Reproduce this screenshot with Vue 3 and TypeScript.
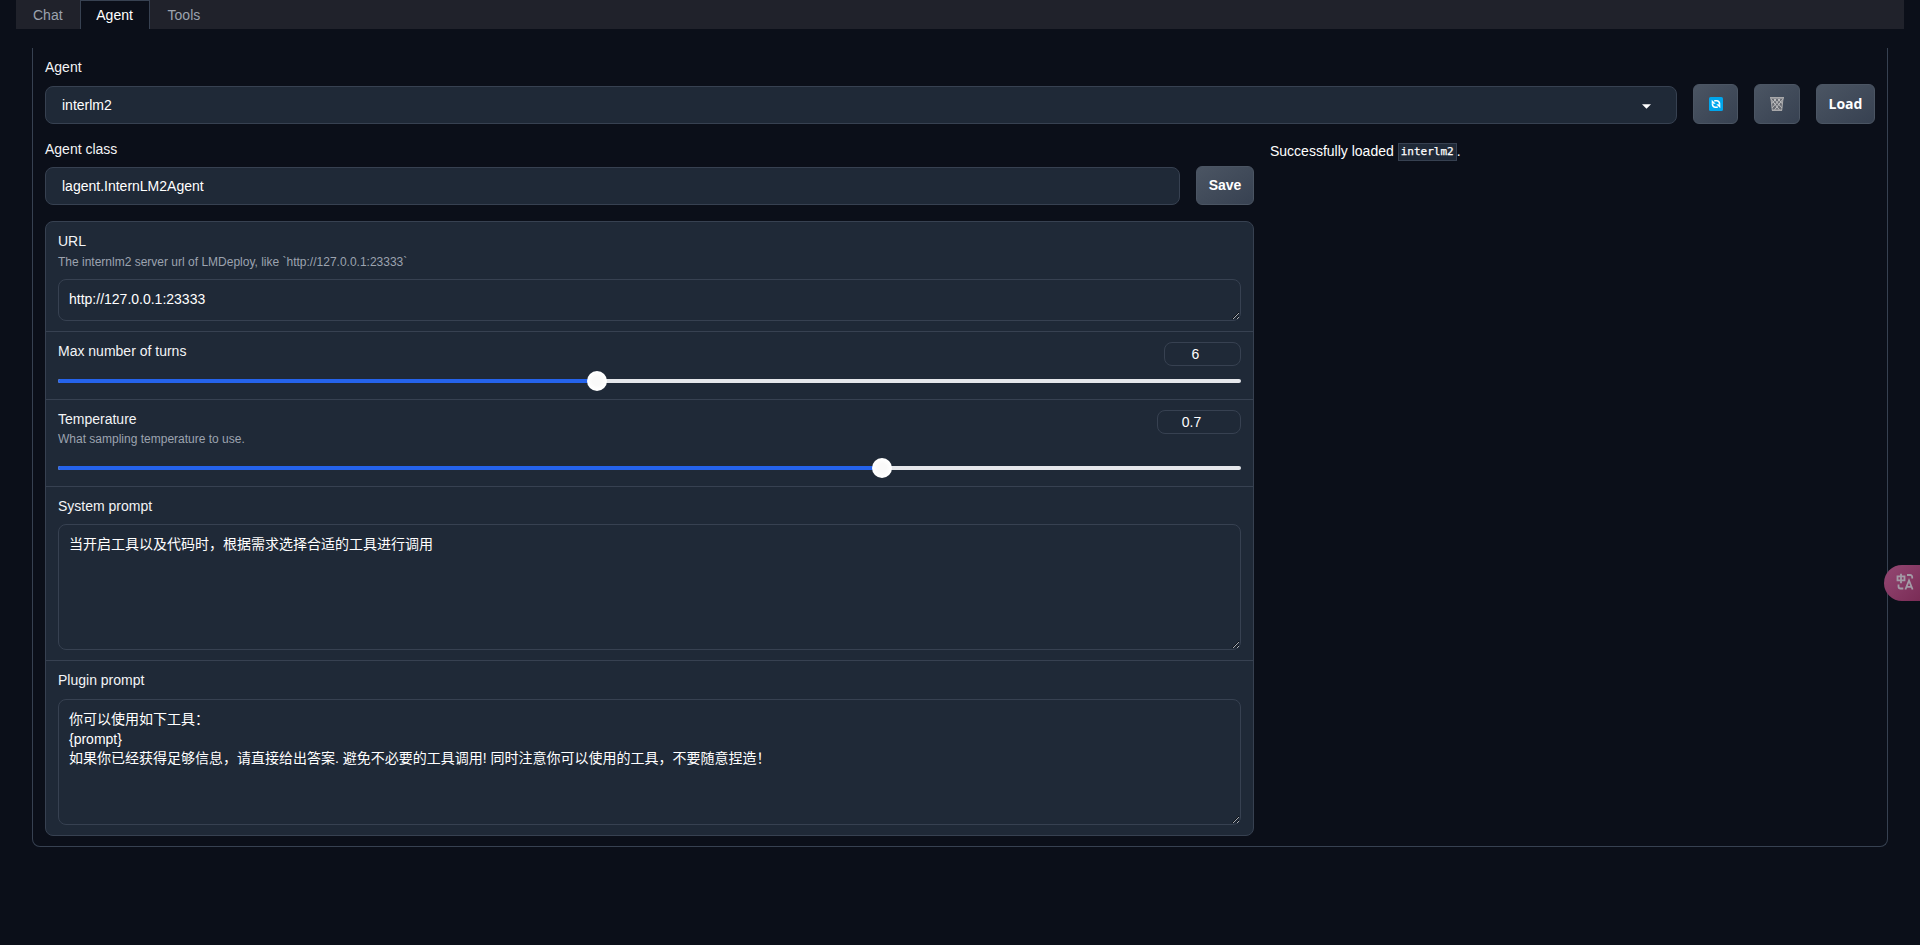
<script setup lang="ts">
import { ref } from 'vue'

interface SliderField {
  label: string
  info?: string
  value: string
  percent: number
}

const tabs = ['Chat', 'Agent', 'Tools']
const activeTab = ref('Agent')
const url = ref('http://127.0.0.1:23333')
const systemPrompt = ref('当开启工具以及代码时，根据需求选择合适的工具进行调用')
const pluginPrompt = ref(
  '你可以使用如下工具：\n{prompt}\n如果你已经获得足够信息，请直接给出答案. 避免不必要的工具调用! 同时注意你可以使用的工具，不要随意捏造！',
)
const sliders: SliderField[] = [
  { label: 'Max number of turns', value: '6', percent: 45.55 },
  { label: 'Temperature', info: 'What sampling temperature to use.', value: '0.7', percent: 69.65 },
]
</script>

<template>
  <div class="page">
    <nav class="tabs">
      <button
        v-for="tab in tabs"
        :key="tab"
        class="tab"
        :class="{ active: tab === activeTab }"
        @click="activeTab = tab"
      >{{ tab }}</button>
    </nav>

    <main class="panel">
      <div class="agent-row">
        <div class="field">
          <div class="label">Agent</div>
          <div class="box">
            <span>interlm2</span>
            <svg class="caret" width="9" height="5" viewBox="0 0 9 5"><path d="M0 0.3h9L4.5 4.8z" fill="#fff" /></svg>
          </div>
        </div>
        <button class="btn refresh">
          <svg width="14" height="14" viewBox="0 0 14 14">
            <rect width="14" height="14" rx="1.6" fill="#00a6ed" />
            <path d="M5.2 3.8h2.6a2.7 2.7 0 0 1 2.7 2.7v.8" fill="none" stroke="#fff" stroke-width="1.6" />
            <path d="M8.8 10.2H6.2a2.7 2.7 0 0 1-2.7-2.7v-.8" fill="none" stroke="#fff" stroke-width="1.6" />
            <path d="M2.7 2.8v3.9h4zM11.3 11.2V7.3h-4z" fill="#fff" />
          </svg>
        </button>
        <button class="btn trash">
          <svg width="14" height="14" viewBox="0 0 14 14">
            <path d="M.9 1.5h12.2l-1.4 11.9H2.3z" fill="#686b72" />
            <path d="M1 2l8.5 11M4 2l8 9M8 2l4.6 5M13 2L4.5 13M10 2L2 11M6 2L1.4 7" stroke="#c9c9cb" stroke-width=".9" />
            <path d="M0 .9h14M2 13.2h10" stroke="#a8a8aa" stroke-width="1.6" />
            <path d="M1 1.5l1.3 12M13 1.5l-1.3 12" stroke="#aaaaac" />
          </svg>
        </button>
        <button class="btn load">Load</button>
      </div>

      <div class="columns">
        <section class="settings">
          <div class="class-row">
            <div class="field">
              <div class="label">Agent class</div>
              <div class="box">lagent.InternLM2Agent</div>
            </div>
            <button class="btn save">Save</button>
          </div>

          <div class="form">
            <div class="block url">
              <div class="label">URL</div>
              <div class="info">The internlm2 server url of LMDeploy, like `http://127.0.0.1:23333`</div>
              <textarea v-model="url" class="short" spellcheck="false" />
            </div>
            <div v-for="s in sliders" :key="s.label" class="block slider" :class="{ tall: s.info }">
              <div class="head">
                <div>
                  <div class="label">{{ s.label }}</div>
                  <div v-if="s.info" class="info">{{ s.info }}</div>
                </div>
                <div class="number">{{ s.value }}</div>
              </div>
              <div class="track">
                <div class="fill" :style="{ width: s.percent + '%' }"><i class="thumb" /></div>
              </div>
            </div>
            <div class="block prompt">
              <div class="label">System prompt</div>
              <textarea v-model="systemPrompt" spellcheck="false" />
            </div>
            <div class="block prompt">
              <div class="label">Plugin prompt</div>
              <textarea v-model="pluginPrompt" spellcheck="false" />
            </div>
          </div>
        </section>
        <p class="status">Successfully loaded <code>interlm2</code>.</p>
      </div>
    </main>

    <div class="translate">
      <svg width="18" height="18" viewBox="0 0 18 18" fill="none" stroke="#a39ba6" stroke-width="1.8">
        <path d="M1.5 3.3h7v4h-7zM5 .8v9.4M11 2h3.2a2 2 0 0 1 2 2v1.5M2.5 11.5v2a2 2 0 0 0 2 2h2.8" />
        <path d="M9.4 16.5l3.6-9 3.6 9M10.6 13.8h4.8" />
      </svg>
    </div>
  </div>
</template>

<style>
body {
  background: #0b0f19;
  overflow: hidden;
}
</style>

<style scoped>
* {
  box-sizing: border-box;
}
.page {
  height: 945px;
  padding: 0 16px;
  background: #0b0f19;
  color: #fff;
  font: 14px/20px "Liberation Sans", Arial, "Noto Sans CJK SC", sans-serif;
}
button {
  font-family: inherit;
  margin: 0;
}
.tabs {
  display: flex;
  height: 29px;
  background: #20222b;
}
.tab {
  height: 29px;
  padding: 0 16px 1px;
  border: 1px solid transparent;
  border-bottom: 0;
  background: none;
  color: #9ca3af;
  font-size: 14px;
  line-height: 26px;
}
.tab.active {
  width: 70px;
  padding: 0 0 1px;
  border-color: #374151;
  background: #0b0f19;
  color: #fff;
}
.tab.active + .tab {
  padding-left: 17px;
}
.panel {
  height: 799px;
  margin: 19px 16px 0;
  padding: 9px 12px 10px;
  border: 1px solid #374151;
  border-top: 0;
  border-radius: 0 0 8px 8px;
}
.agent-row,
.class-row {
  display: flex;
  align-items: flex-end;
  gap: 16px;
}
.agent-row {
  height: 67px;
}
.class-row {
  height: 66px;
}
.field {
  flex: 1;
}
.label {
  color: #f3f4f6;
  line-height: 20px;
}
.field .label {
  margin-bottom: 9px;
}
.class-row .field .label {
  margin-bottom: 8px;
}
.box {
  display: flex;
  align-items: center;
  justify-content: space-between;
  height: 38px;
  padding: 0 25px 0 16px;
  border: 1px solid #374151;
  border-radius: 8px;
  background: #1f2937;
}
.caret {
  margin-top: 2px;
}
.btn {
  display: flex;
  align-items: center;
  justify-content: center;
  height: 40px;
  padding: 0;
  border: 1px solid #4b5563;
  border-radius: 6px;
  background: linear-gradient(to bottom right, #4b5563, #374151);
  color: #fff;
  font-size: 14px;
  font-weight: 700;
}
.refresh {
  width: 45px;
}
.trash {
  width: 46px;
}
.load {
  width: 59px;
  padding-bottom: 1px;
  font-family: "Open Sans", "Noto Sans", sans-serif;
}
.save {
  width: 58px;
  height: 39px;
  padding-bottom: 2px;
}
.columns {
  display: flex;
  gap: 16px;
  margin-top: 15px;
}
.settings {
  width: 1209px;
}
.form {
  height: 615px;
  margin-top: 16px;
  border: 1px solid #374151;
  border-radius: 8px;
  background: #1f2937;
}
.block {
  padding: 9px 12px 0;
  border-bottom: 1px solid #374151;
}
.block:last-child {
  border-bottom: 0;
}
.url {
  height: 110px;
}
.slider {
  height: 68px;
}
.slider.tall {
  height: 87px;
}
.prompt {
  height: 174px;
}
.info {
  color: #9ca3af;
  font-size: 12px;
  line-height: 18px;
}
.url .info {
  padding-top: 2px;
  height: 28px;
}
.tall .info {
  padding-top: 1px;
}
textarea {
  display: block;
  width: 100%;
  height: 126px;
  padding: 10px;
  border: 1px solid #374151;
  border-radius: 8px;
  outline: none;
  background: #1f2937;
  color: #fff;
  font: inherit;
  line-height: 19.6px;
}
textarea.short {
  height: 42px;
  overflow: hidden;
}
.prompt textarea {
  margin-top: 8px;
}
.prompt:last-child textarea {
  margin-top: 9px;
}
.head {
  display: flex;
  justify-content: space-between;
  height: 38px;
}
.tall .head {
  height: 57px;
}
.number {
  width: 77px;
  height: 24px;
  margin-top: 1px;
  padding-right: 14px;
  border: 1px solid #374151;
  border-radius: 8px;
  line-height: 23px;
  text-align: center;
}
.tall .number {
  width: 84px;
  padding-right: 15px;
}
.track {
  height: 4px;
  border-radius: 2px;
  background: #e5e7eb;
}
.fill {
  position: relative;
  height: 4px;
  border-radius: 2px;
  background: #2563eb;
}
.thumb {
  position: absolute;
  top: -8px;
  right: -10px;
  width: 20px;
  height: 20px;
  border-radius: 50%;
  background: radial-gradient(circle, #f9f9f9 30%, #fff 65%);
}
.status {
  margin: 2px 0 0;
}
code {
  display: inline-block;
  height: 18px;
  margin-top: -1px;
  padding: 0 2px;
  border: 1px solid #374151;
  background: #1f2937;
  font: 11px/16px "DejaVu Sans Mono", monospace;
  vertical-align: 1px;
  -webkit-text-stroke: 0.25px #fff;
}
.translate {
  position: absolute;
  top: 565px;
  right: 0;
  width: 36px;
  height: 36px;
  padding: 8px 0 0 12px;
  border-radius: 18px 0 0 18px;
  background: linear-gradient(to bottom right, #944873, #7a2c56);
  overflow: hidden;
}
</style>
